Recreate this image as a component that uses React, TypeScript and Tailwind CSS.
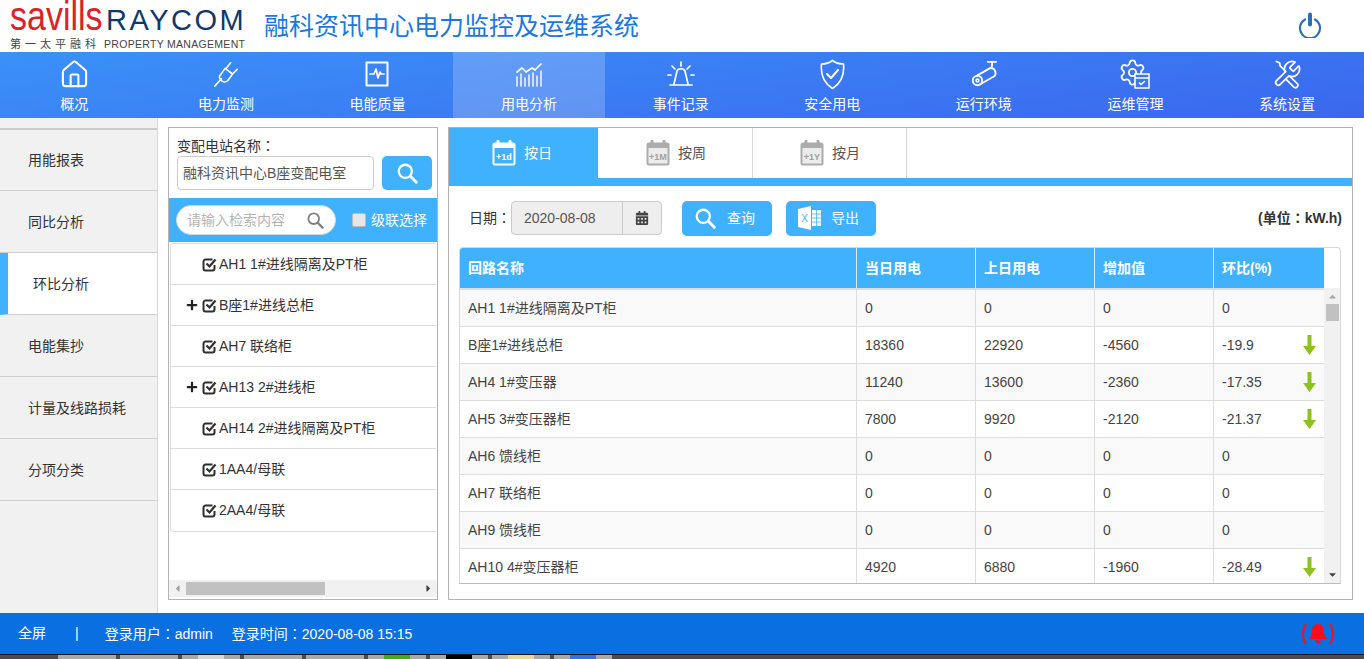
import React from "react";
import { House, Settings } from "lucide-react";
import { FaPlus, FaCalendarAlt, FaCaretUp, FaCaretDown, FaCaretLeft, FaCaretRight } from "react-icons/fa";

const S = { fill: "none", stroke: "white", strokeWidth: 1.7, strokeLinecap: "round", strokeLinejoin: "round" } as const;

const PlugI = () => (
  <svg width="28" height="28" viewBox="0 0 30 30" {...S}>
    <path d="M3 28l7-8" />
    <path d="M9 16l5-7 8 6-5 7c-2 2-5 2-7 0-2-2-3-4-1-6z" />
    <path d="M15 9l5-6M22 15l5-5" />
  </svg>
);
const Quality = () => (
  <svg width="24" height="26" viewBox="0 0 24 26" {...S}>
    <rect x="1.5" y="1.5" width="21" height="23" strokeWidth="2" strokeLinecap="butt" />
    <path d="M5 13h4l2-5 2 9 2-6 1 2h3" />
  </svg>
);
const ChartI = () => (
  <svg width="28" height="30" viewBox="0 0 28 30" {...S}>
    <path d="M2 13l5-4 4 4 6-4 3 2 6-6" />
    <path d="M2 27v-9M6 27v-12M10 27v-8M14 27v-11M18 27v-13M22 27v-10M26 27v-15" strokeWidth="1.4" />
  </svg>
);
const Alarm = () => (
  <svg width="30" height="30" viewBox="0 0 30 30" {...S}>
    <path d="M8 25l3-13c1-3 7-3 8 0l3 13" />
    <path d="M4 26h22M15 3v4M6 7l3 3M24 7l-3 3M2 16h3M25 16h3" />
  </svg>
);
const Shield = () => (
  <svg width="27" height="31" viewBox="0 0 27 31" {...S}>
    <path d="M13.5 1.5c3 2.500 7 3.500 11 3.500 1 10-2 19-11 24.500C4.500 24 1.500 15 2.500 5c4 0 8-1 11-3.500z" />
    <path d="M8 15l4 4 7-8" strokeWidth="2" />
  </svg>
);
const Camera = () => (
  <svg width="28" height="28" viewBox="0 0 28 30" {...S}>
    <path d="M6 17l14-8c2-1 5 0 6 3s0 5-2 6l-14 8" strokeWidth="2" />
    <circle cx="7" cy="22" r="5" strokeWidth="2" />
    <circle cx="7" cy="22" r="1.500" />
    <path d="M22 9l1-7M18 2h9" strokeWidth="2" />
  </svg>
);
const GearCal = () => (
  <div className="w-[30px] h-[30px] relative">
    <Settings size={29} strokeWidth={1.5} className="text-white -ml-[2px] -mt-[1px]" />
    <svg className="absolute right-0 bottom-0" width="16" height="16" viewBox="0 0 16 16" fill="none">
      <rect x="1" y="1" width="14" height="14" fill="#3a77f1" stroke="white" strokeWidth="1.500" />
      <path d="M1 5h14" stroke="white" strokeWidth="1.500" />
      <path d="M5 9.500l2 2 4-3.500" stroke="white" strokeWidth="1.600" />
    </svg>
  </div>
);
const Tools = () => (
  <svg width="30" height="30" viewBox="0 0 24 24" fill="none" stroke="white" strokeWidth="1.400" strokeLinecap="round" strokeLinejoin="round">
    <path d="M14.700 6.300a1 1 0 0 0 0 1.400l1.600 1.600a1 1 0 0 0 1.400 0l3.770-3.770a6 6 0 0 1-7.940 7.940l-6.910 6.910a2.120 2.120 0 0 1-3-3l6.910-6.910a6 6 0 0 1 7.940-7.940l-3.760 3.760z" />
    <path d="M3.500 2l2.500 1 .5 2.500 4.500 4.500" />
    <path d="M14 13.500l6.500 6.500a2 2 0 0 1-3 2.500L11.500 16.500" />
  </svg>
);

const Mag = ({ size = 24, color = "white" }: { size?: number; color?: string }) => (
  <svg width={size} height={size} viewBox="0 0 24 24" fill="none" stroke={color}>
    <circle cx="9.500" cy="9.500" r="7.500" strokeWidth="2.600" />
    <path d="M15.500 15.500l6.500 6.500" strokeWidth="3.400" strokeLinecap="round" />
  </svg>
);

const Check = () => (
  <svg width="15" height="15" viewBox="0 0 15 15" fill="none" className="shrink-0">
    <path d="M12.500 8v3.500a2 2 0 0 1-2 2h-7a2 2 0 0 1-2-2v-7a2 2 0 0 1 2-2h7" stroke="#2f2f2f" strokeWidth="2" />
    <path d="M4.500 6.500l3 3 6-7" stroke="#2f2f2f" strokeWidth="2.200" />
  </svg>
);

const Colon = () => <span className="font-['Noto_Sans_CJK_TC',sans-serif]">：</span>;

const navItems: [string, React.ReactNode][] = [
  ["概况", <House size={31} strokeWidth={1.6} />],
  ["电力监测", <PlugI />],
  ["电能质量", <Quality />],
  ["用电分析", <ChartI />],
  ["事件记录", <Alarm />],
  ["安全用电", <Shield />],
  ["运行环境", <Camera />],
  ["运维管理", <GearCal />],
  ["系统设置", <Tools />],
];

const side = ["用能报表", "同比分析", "环比分析", "电能集抄", "计量及线路损耗", "分项分类"];

const tree: [string, boolean][] = [
  ["AH1 1#进线隔离及PT柜", false],
  ["B座1#进线总柜", true],
  ["AH7 联络柜", false],
  ["AH13 2#进线柜", true],
  ["AH14 2#进线隔离及PT柜", false],
  ["1AA4/母联", false],
  ["2AA4/母联", false],
];

const rows: [string, string, string, string, string, boolean][] = [
  ["AH1 1#进线隔离及PT柜", "0", "0", "0", "0", false],
  ["B座1#进线总柜", "18360", "22920", "-4560", "-19.9", true],
  ["AH4 1#变压器", "11240", "13600", "-2360", "-17.35", true],
  ["AH5 3#变压器柜", "7800", "9920", "-2120", "-21.37", true],
  ["AH6 馈线柜", "0", "0", "0", "0", false],
  ["AH7 联络柜", "0", "0", "0", "0", false],
  ["AH9 馈线柜", "0", "0", "0", "0", false],
  ["AH10 4#变压器柜", "4920", "6880", "-1960", "-28.49", true],
];

const Cal = ({ t, active }: { t: string; active?: boolean }) => {
  const c = active ? "#ffffff" : "#acacac";
  const inner = active ? "#3fb1ff" : "#ececec";
  const tc = active ? "#ffffff" : "#a0a0a0";
  return (
    <svg width="24" height="26" viewBox="0 0 24 26">
      <rect x="0.500" y="2.500" width="23" height="23" rx="2.500" fill={c} />
      <rect x="4.500" y="0" width="3" height="5" rx="1" fill={c} />
      <rect x="16.500" y="0" width="3" height="5" rx="1" fill={c} />
      <rect x="2.500" y="8" width="19" height="15.500" fill={inner} />
      <text x="12" y="20" textAnchor="middle" fontSize="9" fontWeight="700" fill={tc} fontFamily="Liberation Sans, sans-serif">{t}</text>
    </svg>
  );
};

const Excel = () => (
  <svg width="24" height="24" viewBox="0 0 24 24">
    <path d="M0 3l13-3v24L0 21z" fill="white" />
    <text x="6.500" y="16" textAnchor="middle" fontSize="10" fill="#3fb1ff" fontFamily="Liberation Sans, sans-serif">X</text>
    <path d="M14 4h9v16h-9z" fill="white" />
    <path d="M14 8h9M14 12h9M14 16h9M18.500 4v16" stroke="#3fb1ff" strokeWidth="0.800" />
  </svg>
);

const Arrow = () => (
  <svg width="13" height="20" viewBox="0 0 13 20">
    <path d="M4.500 0h4v11h4.500l-6.500 9-6.500-9h4.500z" fill="#8cc120" />
  </svg>
);

const Bell = () => (
  <svg width="32" height="22" viewBox="0 0 32 22" fill="none">
    <path d="M4 1C0 7 0 15 4 21M28 1c4 6 4 14 0 20" stroke="#fb0d1b" strokeWidth="2" />
    <path d="M16 1c-5 0-6 4-6 8 0 4-2 5-3 7l18 0c-1-2-3-3-3-7 0-4-1-8-6-8z" fill="#fb0d1b" />
    <path d="M13 17c0 4 6 4 7 1z" fill="#fb0d1b" />
  </svg>
);

const PowerI = () => (
  <svg width="24" height="26" viewBox="0 0 24 26" fill="none" stroke="#2a6fb5" strokeLinecap="round">
    <path d="M7 7.500a10 10 0 1 0 10 0" strokeWidth="2.200" />
    <path d="M12 2.500v10" strokeWidth="4" />
  </svg>
);

const cols = "grid grid-cols-[397px_119px_119px_119px_110px]";
const taskColors = ["", "", "#d8d8d8", "", "", "#46a81f", "#000000", "#e8d79a", "#3a6fe0"];

export default function App() {
  return (
    <div className="w-[1364px] h-[659px] overflow-hidden flex flex-col bg-white text-[14px] text-[#333] font-['Liberation_Sans','Noto_Sans_CJK_SC',sans-serif]">
      {/* header */}
      <header className="h-[52px] shrink-0 flex items-start relative">
        <div className="w-[236px] ml-[10px] shrink-0">
          <div className="flex items-baseline h-[33px]">
            <span className="text-[#d8232a] text-[40px] leading-[33px] origin-left scale-x-[0.85] w-[96px] inline-block whitespace-nowrap">savills</span>
            <span className="text-[#0d3a6b] text-[29px] leading-[33px] w-[140px] inline-block whitespace-nowrap tracking-[2.500px]">RAYCOM</span>
          </div>
          <div className="flex mt-[5px] text-[#444] leading-[12px] whitespace-nowrap">
            <span className="w-[94px] text-[11px] tracking-[4px]">第一太平融科</span>
            <span className="text-[10.500px] tracking-[0.300px]">PROPERTY MANAGEMENT</span>
          </div>
        </div>
        <h1 className="ml-[18px] mt-[11px] text-[25px] leading-[30px] text-[#1a78e0] whitespace-nowrap">融科资讯中心电力监控及运维系统</h1>
        <div className="ml-auto mr-[42px] mt-[12px]"><PowerI /></div>
      </header>

      {/* nav */}
      <nav className="h-[66px] shrink-0 overflow-hidden bg-[linear-gradient(172deg,#3a91f8,#3b67ee)] text-white">
        <div className="grid grid-cols-[repeat(9,151.600px)] h-full -ml-[1.500px]">
          {navItems.map(([label, icon], i) => (
            <div key={label} className={`flex flex-col items-center ${i === 3 ? "bg-white/20" : ""}`}>
              <div className="h-[44px] flex items-center justify-center">{icon}</div>
              <div className="text-[14px] leading-[16px]">{label}</div>
            </div>
          ))}
        </div>
      </nav>

      {/* main */}
      <main className="flex-1 flex min-h-0">
        <aside className="w-[158px] shrink-0 bg-[#f1f1f1] border-r border-[#d8d8d8] pt-[10px]">
          <div className="border-t-2 border-[#cccccc]">
            {side.map((s, i) => (
              <div
                key={s}
                className={`${i === 0 ? "h-[61px]" : "h-[62px] pt-[1px]"} border-b border-[#cfcfcf] flex items-center ${i === 2 ? "bg-white border-l-[8px] border-l-[#3fb1ff] pl-[25px]" : "pl-[28px]"}`}
              >
                <span className="text-[14px] whitespace-nowrap">{s}</span>
              </div>
            ))}
          </div>
        </aside>

        <div className="flex-1 flex gap-[10px] pl-[10px] pr-[11px] pt-[9px] pb-[13px] min-w-0">
          {/* tree panel */}
          <section className="w-[270px] shrink-0 border border-[#b4b4b4] flex flex-col">
            <div className="pl-[8px] pr-[5px] pt-[9px]">
              <div className="text-[14px] leading-[17px] whitespace-nowrap">变配电站名称<Colon /></div>
              <div className="flex gap-[8px] mt-[1px]">
                <div className="w-[197px] h-[34px] border border-[#cccccc] rounded-[4px] flex items-center pl-[5px] text-[14px] text-[#555] whitespace-nowrap">融科资讯中心B座变配电室</div>
                <div className="w-[50px] h-[34px] bg-[#3fb1ff] rounded-[5px] flex items-center justify-center">
                  <Mag size={21} />
                </div>
              </div>
            </div>
            <div className="h-[44px] mt-[8px] bg-[#3fb1ff] flex items-center pl-[7px] shrink-0">
              <div className="w-[160px] h-[30px] bg-white rounded-full border border-[#d8d8d8] flex items-center pl-[10px] pr-[11px] justify-between">
                <span className="text-[#b4b4b4] text-[14px] whitespace-nowrap">请输入检索内容</span>
                <Mag size={17} color="#808080" />
              </div>
              <div className="w-[14px] h-[14px] ml-[16px] bg-[#e6e6e6] border border-[#bdbdbd] rounded-[2px]" />
              <span className="ml-[5px] text-white text-[14px] whitespace-nowrap">级联选择</span>
            </div>
            <div className="mx-[1px] mt-[1px] border-t border-b border-l border-[#dddddd] rounded-bl-[4px] rounded-tl-[4px]">
              {tree.map(([t, plus], i) => (
                <div key={t} className={`h-[41px] flex items-center ${i < tree.length - 1 ? "border-b border-[#dddddd]" : ""}`}>
                  <span className="w-[13px] ml-[14px] flex justify-center">{plus && <FaPlus size={12} className="text-[#222]" />}</span>
                  <span className="ml-[4px]"><Check /></span>
                  <span className="ml-[2px] text-[14px] whitespace-nowrap">{t}</span>
                </div>
              ))}
            </div>
            <div className="mt-auto h-[17px] mb-[2px] bg-[#f1f1f1] flex items-center">
              <span className="w-[17px] flex justify-center text-[#a0a0a0]"><FaCaretLeft size={11} /></span>
              <span className="w-[139px] h-[13px] bg-[#c1c1c1]" />
              <span className="ml-auto w-[17px] flex justify-center text-[#404040]"><FaCaretRight size={11} /></span>
            </div>
          </section>

          {/* right panel */}
          <section className="flex-1 border border-[#b4b4b4] flex flex-col min-w-0">
            <div className="h-[50px] flex shrink-0">
              <div className="w-[149px] bg-[#3fb1ff] text-white flex items-center pl-[43px] gap-[8px]"><Cal t="+1d" active /><span>按日</span></div>
              <div className="w-[155px] border-r border-[#d8d8d8] flex items-center pl-[48px] gap-[8px] text-[#555]"><Cal t="+1M" /><span>按周</span></div>
              <div className="w-[154px] border-r border-[#d8d8d8] flex items-center pl-[47px] gap-[8px] text-[#555]"><Cal t="+1Y" /><span>按月</span></div>
            </div>
            <div className="h-[8px] bg-[#3fb1ff] shrink-0" />
            <div className="h-[61px] flex items-center shrink-0 pl-[20px] pr-[10px] pt-[3px]">
              <span className="text-[14px] whitespace-nowrap">日期<Colon /></span>
              <div className="w-[151px] h-[34px] border border-[#cccccc] rounded-[4px] bg-[#eeeeee] flex">
                <span className="w-[111px] border-r border-[#cccccc] flex items-center pl-[12px] text-[#555] text-[14px]">2020-08-08</span>
                <span className="flex-1 flex items-center justify-center"><FaCalendarAlt size={14} className="text-[#444]" /></span>
              </div>
              <div className="ml-[20px] w-[90px] h-[35px] bg-[#3fb1ff] rounded-[5px] flex items-center pl-[13px] text-white">
                <Mag size={21} /><span className="ml-[11px] text-[14px]">查询</span>
              </div>
              <div className="ml-[14px] w-[90px] h-[35px] bg-[#3fb1ff] rounded-[5px] flex items-center pl-[12px] text-white">
                <Excel /><span className="ml-[9px] text-[14px]">导出</span>
              </div>
              <b className="ml-auto text-[14px] text-[#333] whitespace-nowrap">(单位<Colon />kW.h)</b>
            </div>

            {/* table */}
            <div className="ml-[10px] mr-[11px] h-[337px] border border-[#d8d8d8] border-b-[#bbbbbb] rounded-t-[4px] overflow-hidden shrink-0 flex flex-col">
              <div className={`${cols} h-[40px] w-[864px] shrink-0 text-white font-bold text-[14px] bg-[#3fb1ff]`}>
                {["回路名称", "当日用电", "上日用电", "增加值", "环比(%)"].map((h, i) => (
                  <div key={h} className={`flex items-center pl-[8px] pr-[1px] ${i < 4 ? "border-r border-[#d8eeff]" : ""}`}>{h}</div>
                ))}
              </div>
              <div className="flex flex-1 min-h-0">
                <div className="w-[864px] shrink-0 border-t-2 border-[#dddddd]">
                  {rows.map((r, i) => (
                    <div key={r[0]} className={`${cols} ${i === 0 ? "h-[36px]" : "h-[37px] border-t border-[#dddddd]"} ${i % 2 === 0 ? "bg-[#f9f9f9]" : "bg-white"} text-[#444]`}>
                      {r.slice(0, 4).map((c, j) => (
                        <div key={j} className="flex items-center pl-[8px] border-r border-[#dddddd] text-[14px] whitespace-nowrap">{c as string}</div>
                      ))}
                      <div className="flex items-center justify-between pl-[8px] pr-[8px] text-[14px]">
                        <span>{r[4]}</span>
                        {r[5] && <Arrow />}
                      </div>
                    </div>
                  ))}
                </div>
                <div className="w-[17px] bg-[#f1f1f1] flex flex-col items-center">
                  <FaCaretUp size={11} className="text-[#a8a8a8] mt-[3px]" />
                  <span className="w-[13px] h-[17px] bg-[#c1c1c1] mt-[2px]" />
                  <FaCaretDown size={11} className="text-[#404040] mt-auto mb-[3px]" />
                </div>
              </div>
            </div>
          </section>
        </div>
      </main>

      {/* footer */}
      <footer className="h-[41px] shrink-0 bg-[#0a6fe0] text-white flex items-center text-[14px] pl-[18px] pr-[30px]">
        <span>全屏</span>
        <span className="ml-[29px]">|</span>
        <span className="ml-[26px]">登录用户<Colon />admin</span>
        <span className="ml-[19px]">登录时间<Colon />2020-08-08 15:15</span>
        <span className="ml-auto"><Bell /></span>
      </footer>

      {/* taskbar strip */}
      <div className="h-[5px] shrink-0 bg-[#4e4a50] border-t border-[#111] flex gap-[4px] pl-[58px]">
        {taskColors.map((c, i) => (
          <div key={i} className="w-[58px] h-full bg-[#a9a9a9] flex justify-center">
            {c && <div className="w-[26px] h-full" style={{ background: c }} />}
          </div>
        ))}
      </div>
    </div>
  );
}
